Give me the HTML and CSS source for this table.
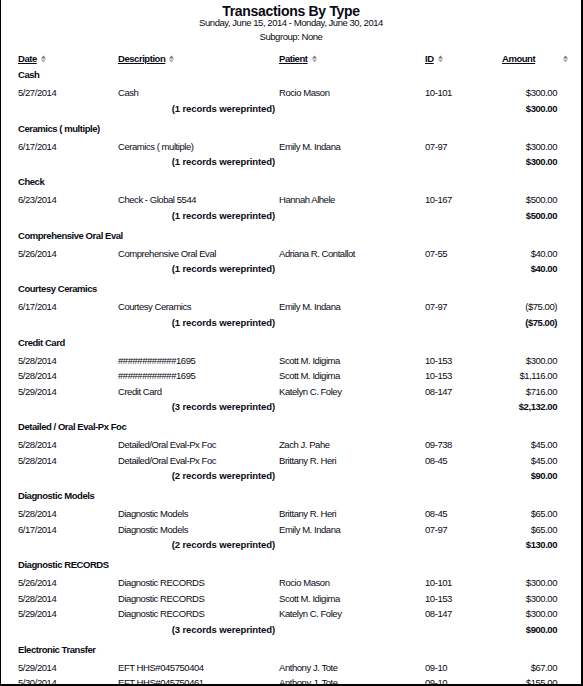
FILE: index.html
```html
<!DOCTYPE html>
<html>
<head>
<meta charset="utf-8">
<link rel="stylesheet" href="styles.css">
</head>
<body>
<div class="page">
  <div class="report-head">
    <div class="title">Transactions By Type</div>
    <div class="subtitle">Sunday, June 15, 2014 - Monday, June 30, 2014</div>
    <div class="subgroup">Subgroup: None</div>
  </div>

  <div class="cols">
    <div class="col-h"><span class="lbl">Date</span><svg class="sort" viewBox="0 0 5 8" width="5" height="8"><path d="M0 3.5 L2.5 0.5 L5 3.5Z" fill="#777"/><path d="M0 4.5 L2.5 7.5 L5 4.5Z" fill="#aaa"/></svg></div>
    <div class="col-h"><span class="lbl">Description</span><svg class="sort" viewBox="0 0 5 8" width="5" height="8"><path d="M0 3.5 L2.5 0.5 L5 3.5Z" fill="#777"/><path d="M0 4.5 L2.5 7.5 L5 4.5Z" fill="#aaa"/></svg></div>
    <div class="col-h"><span class="lbl">Patient</span><svg class="sort" viewBox="0 0 5 8" width="5" height="8"><path d="M0 3.5 L2.5 0.5 L5 3.5Z" fill="#777"/><path d="M0 4.5 L2.5 7.5 L5 4.5Z" fill="#aaa"/></svg></div>
    <div class="col-h"><span class="lbl">ID</span><svg class="sort" viewBox="0 0 5 8" width="5" height="8"><path d="M0 3.5 L2.5 0.5 L5 3.5Z" fill="#777"/><path d="M0 4.5 L2.5 7.5 L5 4.5Z" fill="#aaa"/></svg></div>
    <div class="col-h amount-h"><span class="lbl">Amount</span><svg class="sort wide" viewBox="0 0 5 8" width="5" height="8"><path d="M0 3.5 L2.5 0.5 L5 3.5Z" fill="#777"/><path d="M0 4.5 L2.5 7.5 L5 4.5Z" fill="#aaa"/></svg></div>
  </div>

  <section class="group">
    <div class="group-name">Cash</div>
    <div class="row"><span>5/27/2014</span><span>Cash</span><span>Rocio Mason</span><span>10-101</span><span class="amt">$300.00</span></div>
    <div class="sum"><span class="cnt">(1 records wereprinted)</span><span class="amt">$300.00</span></div>
  </section>

  <section class="group">
    <div class="group-name">Ceramics ( multiple)</div>
    <div class="row"><span>6/17/2014</span><span>Ceramics ( multiple)</span><span>Emily M. Indana</span><span>07-97</span><span class="amt">$300.00</span></div>
    <div class="sum"><span class="cnt">(1 records wereprinted)</span><span class="amt">$300.00</span></div>
  </section>

  <section class="group">
    <div class="group-name">Check</div>
    <div class="row"><span>6/23/2014</span><span>Check - Global 5544</span><span>Hannah Alhele</span><span>10-167</span><span class="amt">$500.00</span></div>
    <div class="sum"><span class="cnt">(1 records wereprinted)</span><span class="amt">$500.00</span></div>
  </section>

  <section class="group">
    <div class="group-name">Comprehensive Oral Eval</div>
    <div class="row"><span>5/26/2014</span><span>Comprehensive Oral Eval</span><span>Adriana R. Contallot</span><span>07-55</span><span class="amt">$40.00</span></div>
    <div class="sum"><span class="cnt">(1 records wereprinted)</span><span class="amt">$40.00</span></div>
  </section>

  <section class="group">
    <div class="group-name">Courtesy Ceramics</div>
    <div class="row"><span>6/17/2014</span><span>Courtesy Ceramics</span><span>Emily M. Indana</span><span>07-97</span><span class="amt">($75.00)</span></div>
    <div class="sum"><span class="cnt">(1 records wereprinted)</span><span class="amt">($75.00)</span></div>
  </section>

  <section class="group">
    <div class="group-name">Credit Card</div>
    <div class="row"><span>5/28/2014</span><span>############1695</span><span>Scott M. Idigima</span><span>10-153</span><span class="amt">$300.00</span></div>
    <div class="row"><span>5/28/2014</span><span>############1695</span><span>Scott M. Idigima</span><span>10-153</span><span class="amt">$1,116.00</span></div>
    <div class="row"><span>5/29/2014</span><span>Credit Card</span><span>Katelyn C. Foley</span><span>08-147</span><span class="amt">$716.00</span></div>
    <div class="sum"><span class="cnt">(3 records wereprinted)</span><span class="amt">$2,132.00</span></div>
  </section>

  <section class="group">
    <div class="group-name">Detailed / Oral Eval-Px Foc</div>
    <div class="row"><span>5/28/2014</span><span>Detailed/Oral Eval-Px Foc</span><span>Zach J. Pahe</span><span>09-738</span><span class="amt">$45.00</span></div>
    <div class="row"><span>5/28/2014</span><span>Detailed/Oral Eval-Px Foc</span><span>Brittany R. Heri</span><span>08-45</span><span class="amt">$45.00</span></div>
    <div class="sum"><span class="cnt">(2 records wereprinted)</span><span class="amt">$90.00</span></div>
  </section>

  <section class="group">
    <div class="group-name">Diagnostic Models</div>
    <div class="row"><span>5/28/2014</span><span>Diagnostic Models</span><span>Brittany R. Heri</span><span>08-45</span><span class="amt">$65.00</span></div>
    <div class="row"><span>6/17/2014</span><span>Diagnostic Models</span><span>Emily M. Indana</span><span>07-97</span><span class="amt">$65.00</span></div>
    <div class="sum"><span class="cnt">(2 records wereprinted)</span><span class="amt">$130.00</span></div>
  </section>

  <section class="group">
    <div class="group-name">Diagnostic RECORDS</div>
    <div class="row"><span>5/26/2014</span><span>Diagnostic RECORDS</span><span>Rocio Mason</span><span>10-101</span><span class="amt">$300.00</span></div>
    <div class="row"><span>5/28/2014</span><span>Diagnostic RECORDS</span><span>Scott M. Idigima</span><span>10-153</span><span class="amt">$300.00</span></div>
    <div class="row"><span>5/29/2014</span><span>Diagnostic RECORDS</span><span>Katelyn C. Foley</span><span>08-147</span><span class="amt">$300.00</span></div>
    <div class="sum"><span class="cnt">(3 records wereprinted)</span><span class="amt">$900.00</span></div>
  </section>

  <section class="group">
    <div class="group-name">Electronic Transfer</div>
    <div class="row"><span>5/29/2014</span><span>EFT HHS#045750404</span><span>Anthony J. Tote</span><span>09-10</span><span class="amt">$67.00</span></div>
    <div class="row"><span>5/30/2014</span><span>EFT HHS#045750461</span><span>Anthony J. Tote</span><span>09-10</span><span class="amt">$155.00</span></div>
  </section>
</div>
</body>
</html>
```

FILE: styles.css
```css
* { box-sizing: border-box; }
html, body { margin: 0; padding: 0; background: #fff; }
body {
  font-family: "Liberation Sans", Arial, sans-serif;
  font-size: 9.5px;
  letter-spacing: -0.45px;
  color: #0a0a14;
}
.page {
  width: 583px;
  height: 686px;
  border-left: 1px solid #000;
  border-right: 2px solid #000;
  border-bottom: 2px solid #000;
  overflow: hidden;
  padding: 0 24px 0 17px;
}
.report-head {
  text-align: center;
  padding-top: 4px;
  margin-left: -17px;
  margin-right: -24px;
}
.title {
  font-weight: bold;
  font-size: 14px;
  letter-spacing: -0.3px;
  line-height: 14px;
}
.subtitle { line-height: 9px; }
.subgroup { line-height: 10px; margin-top: 5px; }

.cols, .row {
  display: grid;
  grid-template-columns: 100px 161px 146px 52px 80px;
}
.cols {
  margin-top: 9px;
  line-height: 16px;
  font-weight: bold;
}
.col-h { display: flex; align-items: center; white-space: nowrap; }
.lbl { text-decoration: underline; }
.sort { margin-left: 4px; flex-shrink: 0; }
.amount-h { padding-left: 25px; }
.sort.wide { margin-left: 28px; }

.group-name {
  font-weight: bold;
  line-height: 16px;
  padding-bottom: 2px;
  white-space: nowrap;
}
.row {
  line-height: 15.5px;
  height: 15.5px;
  white-space: nowrap;
}
.amt { text-align: right; }
.sum {
  display: grid;
  grid-template-columns: 261px 146px 52px 80px;
  font-weight: bold;
  line-height: 16px;
  padding-bottom: 4px;
}
.sum .cnt { text-align: right; padding-right: 4px; letter-spacing: -0.1px; }
.sum .amt { grid-column: 4; }
```
